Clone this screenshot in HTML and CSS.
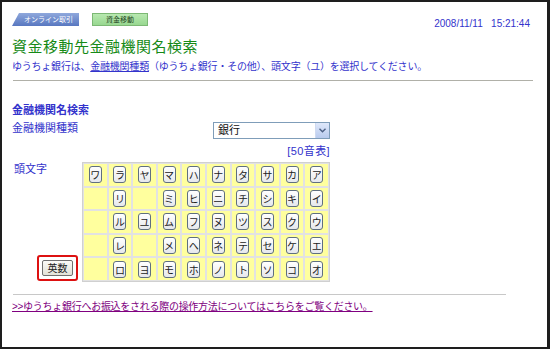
FILE: index.html
```html
<!DOCTYPE html>
<html lang="ja">
<head>
    <meta charset="UTF-8">
    <title>資金移動先金融機関名検索</title>
    <link rel="stylesheet" href="styles.css">
</head>
<body>
    <div class="frame">
        <div class="top-bar">
            <div class="tabs">
                <span class="tab tab-online">オンライン取引</span>
                <span class="tab tab-transfer">資金移動</span>
            </div>
            <div class="datetime">2008/11/11&nbsp;&nbsp;&nbsp;15:21:44</div>
        </div>

        <h1 class="page-title">資金移動先金融機関名検索</h1>
        <p class="lead">ゆうちょ銀行は、<a href="#" class="lead-link">金融機関種類</a>（ゆうちょ銀行・その他）、頭文字（ユ）を選択してください。</p>
        <hr class="rule">

        <div class="search">
            <h2 class="section-title">金融機関名検索</h2>
            <div class="field-row">
                <span class="field-label">金融機関種類</span>
                <div class="select">
                    <span class="select-value">銀行</span>
                    <span class="select-btn">
                        <svg width="7" height="5" viewBox="0 0 7 5"><path d="M0.5 0.8 L3.5 3.8 L6.5 0.8" fill="none" stroke="#4d6185" stroke-width="1.4"/></svg>
                    </span>
                </div>
            </div>
            <div class="table-link"><a href="#">[50音表]</a></div>

            <div class="kana-area">
                <div class="kana-side">
                    <span class="field-label">頭文字</span>
                    <span class="alnum-wrap"><button class="alnum-btn">英数</button></span>
                </div>
                <div class="kana-grid" id="kana-grid"></div>
            </div>
        </div>

        <hr class="rule rule-bottom">
        <a href="#" class="help-link">&gt;&gt;ゆうちょ銀行へお振込をされる際の操作方法についてはこちらをご覧ください。</a>
    </div>

    <script>
        document.addEventListener('DOMContentLoaded', () => {
            const rows = [
                ['ワ', 'ラ', 'ヤ', 'マ', 'ハ', 'ナ', 'タ', 'サ', 'カ', 'ア'],
                ['', 'リ', '', 'ミ', 'ヒ', 'ニ', 'チ', 'シ', 'キ', 'イ'],
                ['', 'ル', 'ユ', 'ム', 'フ', 'ヌ', 'ツ', 'ス', 'ク', 'ウ'],
                ['', 'レ', '', 'メ', 'ヘ', 'ネ', 'テ', 'セ', 'ケ', 'エ'],
                ['', 'ロ', 'ヨ', 'モ', 'ホ', 'ノ', 'ト', 'ソ', 'コ', 'オ']
            ];
            const grid = document.getElementById('kana-grid');

            rows.forEach(row => {
                row.forEach(kana => {
                    const cell = document.createElement('div');
                    cell.className = 'kana-cell';
                    if (kana) {
                        const key = document.createElement('button');
                        key.className = 'kana-key';
                        key.textContent = kana;
                        cell.appendChild(key);
                    }
                    grid.appendChild(cell);
                });
            });
        });
    </script>
</body>
</html>
```

FILE: styles.css
```css
body {
    margin: 0;
    font-family: "Liberation Sans", "Noto Sans CJK JP", sans-serif;
    background: #ffffff;
}

.frame {
    width: 550px;
    height: 349px;
    box-sizing: border-box;
    border: 2px solid #1e1e1e;
    border-right-width: 3px;
    padding: 11px 11px 0 10px;
    color: #3333cc;
}

.top-bar {
    display: flex;
    justify-content: space-between;
    align-items: flex-start;
}

.tabs {
    display: flex;
    gap: 13px;
}

.tab {
    height: 13px;
    box-sizing: border-box;
    font-size: 7px;
    line-height: 13px;
    text-align: center;
}

.tab-online {
    width: 67px;
    padding-left: 6px;
    color: #ffffff;
    background: linear-gradient(#8fa8dc, #5877c0);
    clip-path: polygon(7px 0, 100% 0, 100% 100%, 0 100%);
}

.tab-transfer {
    width: 56px;
    color: #224422;
    background: linear-gradient(#b8e8b0, #98d890);
    border: 1px solid #7cb874;
    line-height: 11px;
}

.datetime {
    font-size: 10px;
    margin-top: 5px;
    margin-right: 6px;
}

.page-title {
    margin: 9px 0 0;
    font-size: 15px;
    letter-spacing: 0.5px;
    font-weight: normal;
    color: #168a16;
    line-height: 18px;
}

.lead {
    margin: 4px 0 0;
    font-size: 10px;
    line-height: 13px;
    white-space: nowrap;
    letter-spacing: -0.22px;
}

.lead-link {
    color: #3333cc;
}

.rule {
    margin: 7px 3px 0 1px;
    border: 0;
    border-top: 1px solid #b0b0a8;
}

.search {
    width: 318px;
    padding-top: 22px;
}

.section-title {
    margin: 0;
    font-size: 11px;
    font-weight: bold;
    line-height: 14px;
}

.field-row {
    display: flex;
    justify-content: space-between;
    align-items: flex-start;
    margin-top: 4px;
}

.field-label {
    font-size: 11px;
    line-height: 14px;
}

.select {
    display: flex;
    width: 117px;
    height: 17px;
    box-sizing: border-box;
    margin-top: 1px;
    border: 1px solid #7f9db9;
    background: #ffffff;
}

.select-value {
    flex: 1;
    font-size: 11px;
    line-height: 15px;
    padding-left: 4px;
    color: #111111;
}

.select-btn {
    width: 13px;
    display: flex;
    align-items: center;
    justify-content: center;
    background: linear-gradient(#dfe8fa, #b9cbee);
    border-left: 1px solid #cfdaf0;
}

.table-link {
    text-align: right;
    font-size: 11px;
    line-height: 14px;
    letter-spacing: 0.4px;
    margin-top: 5px;
}

.table-link a {
    color: #3333cc;
    text-decoration: none;
}

.kana-area {
    display: flex;
    margin-top: 4px;
}

.kana-side {
    width: 70px;
    display: flex;
    flex-direction: column;
    justify-content: space-between;
    padding-left: 2px;
    box-sizing: border-box;
}

.alnum-wrap {
    align-self: flex-end;
    margin-right: 4px;
    margin-bottom: 1px;
    padding: 3px;
    border: 2px solid #dd1111;
    border-radius: 3px;
}

.alnum-btn {
    display: block;
    width: 31px;
    height: 16px;
    padding: 0;
    font-family: "Noto Sans CJK JP", sans-serif;
    font-size: 10px;
    line-height: 14px;
    color: #222222;
    border: 1px solid #707070;
    border-radius: 2px;
    background: linear-gradient(#fbfbf8, #e2e2d8);
}

.kana-grid {
    width: 248px;
    height: 120px;
    box-sizing: border-box;
    display: grid;
    grid-template-columns: repeat(10, 1fr);
    grid-template-rows: repeat(5, 1fr);
    gap: 2px;
    padding: 1px;
    background: #e2e2e2;
    border: 1px solid #d0d0d0;
}

.kana-cell {
    background: #ffff9e;
    display: flex;
    align-items: center;
    justify-content: center;
}

.kana-key {
    width: 13px;
    height: 17px;
    padding: 0;
    font-family: "Noto Sans CJK JP", sans-serif;
    font-size: 10px;
    line-height: 15px;
    color: #222222;
    border: 1px solid #5f6f80;
    border-radius: 3px;
    background: linear-gradient(#ffffff, #e6e8ec);
}

.rule-bottom {
    margin: 12px 30px 0 1px;
    border-top-color: #c8c8c8;
}

.help-link {
    display: inline-block;
    margin-top: 5px;
    font-size: 10px;
    line-height: 13px;
    letter-spacing: -0.28px;
    color: #800080;
}
```
